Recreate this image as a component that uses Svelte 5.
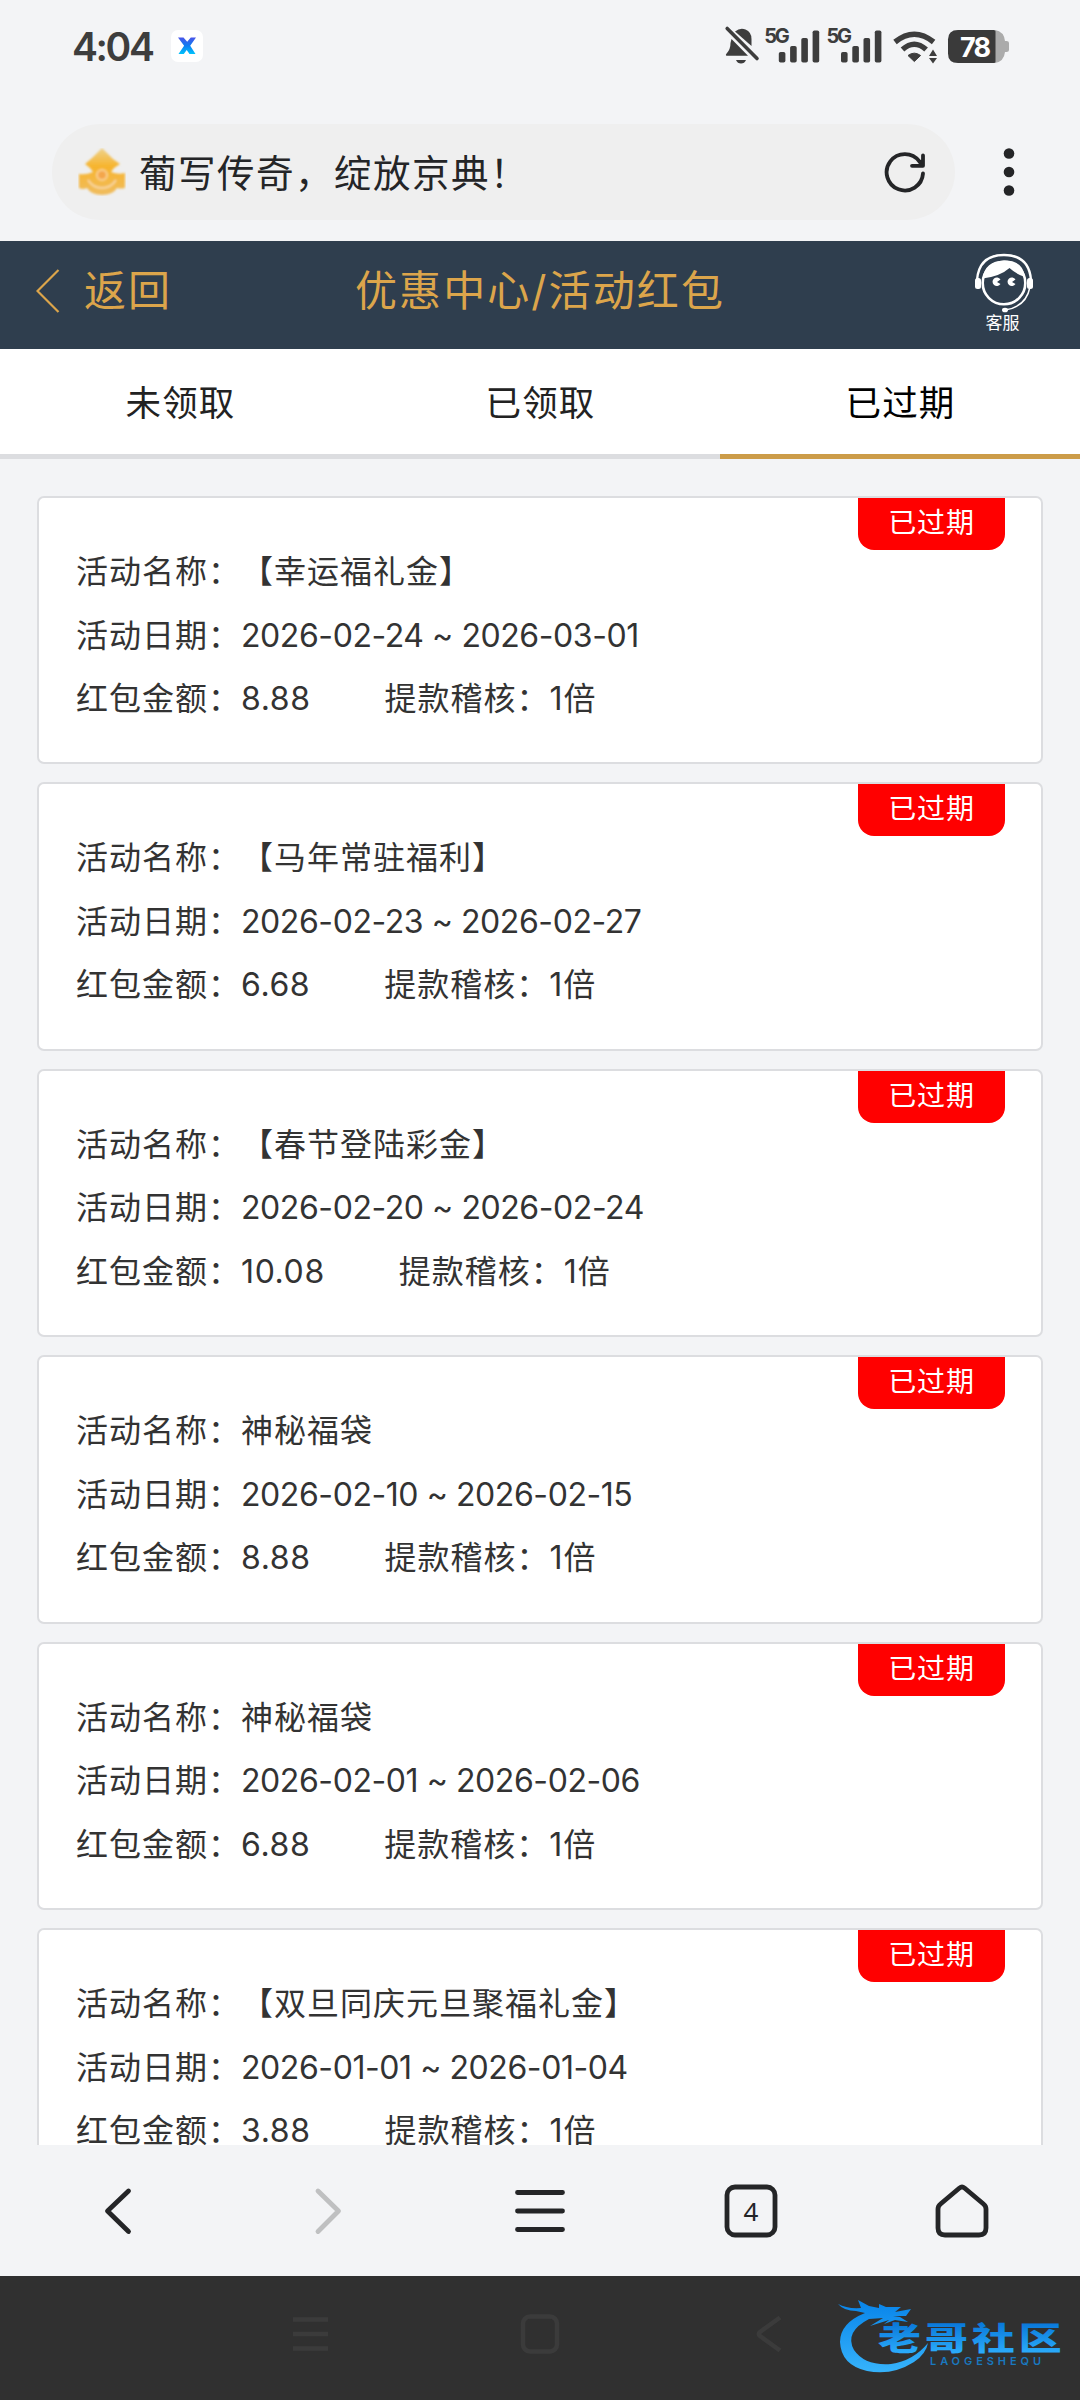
<script lang="ts">
  type Packet = {
    name: string;
    start: string;
    end: string;
    amount: string;
  };

  const tabs = ["未领取", "已领取", "已过期"];
  let active = $state(2);

  const packets: Packet[] = [
    { name: "【幸运福礼金】", start: "2026-02-24", end: "2026-03-01", amount: "8.88" },
    { name: "【马年常驻福利】", start: "2026-02-23", end: "2026-02-27", amount: "6.68" },
    { name: "【春节登陆彩金】", start: "2026-02-20", end: "2026-02-24", amount: "10.08" },
    { name: "神秘福袋", start: "2026-02-10", end: "2026-02-15", amount: "8.88" },
    { name: "神秘福袋", start: "2026-02-01", end: "2026-02-06", amount: "6.88" },
    { name: "【双旦同庆元旦聚福礼金】", start: "2026-01-01", end: "2026-01-04", amount: "3.88" },
  ];

  // left edge and height of each signal bar
  const bars = [[14.5, 10.5], [25.8, 16.5], [37, 24.5], [48.3, 32]];
</script>

<div class="screen">
  <div class="status">
    <span class="clock">4:04</span>
    <svg class="app-badge" viewBox="0 0 32 32" aria-hidden="true">
      <defs>
        <linearGradient id="x-fill" x1="0" y1="0" x2="0" y2="1">
          <stop offset="0" stop-color="#4a54e8" />
          <stop offset=".5" stop-color="#0b7df2" />
          <stop offset="1" stop-color="#00c3fb" />
        </linearGradient>
      </defs>
      <rect width="32" height="32" rx="7" fill="#fff" />
      <path d="M7 7.5h5.5l3.7 4.3 3.6-4.3H25l-5.8 8.2 5.3 8.3h-6l-2.8-3.9-2.9 3.9H7.5l5.6-8.3z" fill="url(#x-fill)" />
    </svg>
    <svg class="status-icons" viewBox="0 0 288 40" aria-hidden="true">
      <g fill="#3d3d3d">
        <path d="M9.5 13 26 29.8H4.5Q3 29 5 27 8.5 23 8.5 17z" />
        <path d="M13 5.5Q18 1.500 23.500 3.500 29.500 6 29.500 13V20z" />
        <path d="M14 34h10q-1.500 3.500-5 3.500t-5-3.500z" />
        <path d="M5.200 2.500 35 32.500" stroke="#3d3d3d" stroke-width="3.600" stroke-linecap="round" />
        {#each [42.3, 104.5] as x}
          <g transform="translate({x} 0)">
            <text x="0" y="16.500" class="net" textLength="25.500">5G</text>
            {#each bars as [left, h]}
              <rect x={left} y={36.5 - h} width="6.600" height={h} rx="1.800" />
            {/each}
          </g>
        {/each}
        <path d="M186 29.500Q192.300 24.800 198.600 29.500L192.300 35.500z" stroke="#3d3d3d" stroke-width="1" stroke-linejoin="round" />
        <path d="M207 30 211 23.500l4 6.500zM207 32h8l-4 5.500z" />
      </g>
      <g fill="none" stroke="#3d3d3d" stroke-width="5.500">
        <path d="M173 16Q192.300.5 211.600 16" />
        <path d="M180.500 23.500Q192.300 13 204.100 23.500" />
      </g>
      <path d="M273 4q9 1.500 10 11h1.500q2.500 0 2.500 2v7q0 2-2.500 2H283q-1 9.500-10 11z" fill="#ababab" />
      <path d="M236 4H272q1.500 0 1.500 1.500v30q0 1.500-1.500 1.500H236q-10 0-10-9.500v-14Q226 4 236 4z" fill="#3a3a3a" />
      <text x="238" y="30.500" class="battery" textLength="31">78</text>
    </svg>
  </div>

  <div class="browser-bar">
    <div class="address">
      <svg class="favicon" viewBox="0 0 48 48" aria-hidden="true">
        <defs>
          <linearGradient id="gold" x1="0" y1="0" x2="0" y2="1">
            <stop offset="0" stop-color="#eed28d" />
            <stop offset=".4" stop-color="#f7b42d" />
            <stop offset="1" stop-color="#f0bd60" />
          </linearGradient>
          <filter id="soft"><feGaussianBlur stdDeviation="1.100" /></filter>
        </defs>
        <g filter="url(#soft)">
          <path d="M24 0 32 8 35 11 42 16 36 20 33 24Q40 27 47 25V40Q42 41 39 40 35 47 24 47T9 40Q5 42 1 40V26Q8 27 15 24L12 20 7 16 14 10z" fill="url(#gold)" />
          <circle cx="24" cy="27" r="5" fill="#f4a64b" stroke="#fbd18f" stroke-width="2" />
          <path d="M10 32q5 8 14 8t14-8" fill="none" stroke="#f8d7a2" stroke-width="2" />
        </g>
      </svg>
      <span class="page-title">葡写传奇，绽放京典！</span>
      <svg class="reload" viewBox="0 0 44 44" aria-hidden="true">
        <path d="M40 23.500A18.200 18.200 0 1 1 36.500 11.500L39.500 15.500M40 5.500V15.800H29" />
      </svg>
    </div>
    <svg class="more" viewBox="0 0 12 50" aria-hidden="true">
      <circle cx="6" cy="6.500" r="5.300" />
      <circle cx="6" cy="25" r="5.300" />
      <circle cx="6" cy="43.500" r="5.300" />
    </svg>
  </div>

  <header class="nav">
    <button class="back" type="button">
      <svg viewBox="0 0 24 44" aria-hidden="true"><path d="M22.500 1 1.500 22l21 21" /></svg>
      <span>返回</span>
    </button>
    <h1>优惠中心/活动红包</h1>
    <button class="service" type="button">
      <svg viewBox="0 0 60 60" aria-hidden="true">
        <path d="M3 27Q5 2 30 2t27 25" fill="none" stroke="#fff" stroke-width="2.400" />
        <path d="M56 34Q52 54 31 57" fill="none" stroke="#fff" stroke-width="1.500" />
        <rect x="1" y="25" width="6" height="11" rx="2.500" />
        <rect x="53" y="25" width="6" height="11" rx="2.500" />
        <circle cx="30" cy="30" r="21.300" fill="none" stroke="#fff" stroke-width="2.600" />
        <path d="M8.500 25.500Q11 8 30 7.500T51 24Q42 21 35.500 15 26 23.500 8.500 25.500z" />
        <path d="M26.500 26.500 23 29l3.500 2a4.300 4.300 0 1 1 0-4.500zM41.500 26.500 38 29l3.500 2a4.300 4.300 0 1 1 0-4.500z" />
        <ellipse cx="31" cy="57" rx="3" ry="2.300" />
      </svg>
      <span>客服</span>
    </button>
  </header>

  <nav class="tabs">
    {#each tabs as tab, i}
      <button type="button" class:active={active === i} onclick={() => (active = i)}>{tab}</button>
    {/each}
  </nav>

  <main class="list">
    {#each packets as packet}
      <article class="card">
        <span class="badge">已过期</span>
        <p>活动名称：{packet.name}</p>
        <p>活动日期：<span class="date">{packet.start} ~ {packet.end}</span></p>
        <p>红包金额：<span class="amount">{packet.amount}</span>提款稽核：1倍</p>
      </article>
    {/each}
  </main>

  <footer class="toolbar">
    <svg viewBox="0 0 60 60" aria-hidden="true"><path d="M40.500 10 19.500 30l21 20.500" /></svg>
    <svg class="disabled" viewBox="0 0 60 60" aria-hidden="true"><path d="M19 10l20.500 20L19 50.500" /></svg>
    <svg viewBox="0 0 60 60" aria-hidden="true"><path d="M7.500 11.500h45M7.500 30h45M7.500 48.500h45" /></svg>
    <svg viewBox="0 0 60 60" aria-hidden="true">
      <rect x="6" y="6" width="48" height="48" rx="8" />
      <text x="30" y="39.500">4</text>
    </svg>
    <svg viewBox="0 0 60 60" aria-hidden="true">
      <path d="M6 28q0-3 2.500-5L27.500 7Q30 5 32.500 7l19 16q2.500 2 2.500 5v19q0 7-7 7H13q-7 0-7-7z" />
    </svg>
  </footer>

  <div class="system">
    <svg viewBox="0 0 40 40" aria-hidden="true"><path d="M2 5.500h35M2 20h35M2 34.500h35" /></svg>
    <svg viewBox="0 0 40 40" aria-hidden="true"><rect x="3" y="2.500" width="34" height="35" rx="7" /></svg>
    <svg viewBox="0 0 40 40" aria-hidden="true"><path d="M31 3.500 11 18q-2.500 2 0 4l20 14.500" /></svg>
    <svg class="watermark" viewBox="0 0 230 84" aria-hidden="true">
      <defs>
        <linearGradient id="blue" gradientUnits="userSpaceOnUse" x1="0" y1="12" x2="0" y2="78">
          <stop offset="0" stop-color="#0a86ea" />
          <stop offset="1" stop-color="#35b2fb" />
        </linearGradient>
        <linearGradient id="blue-text" gradientUnits="userSpaceOnUse" x1="0" y1="-28" x2="0" y2="2">
          <stop offset="0" stop-color="#0876d8" />
          <stop offset="1" stop-color="#2aaafa" />
        </linearGradient>
      </defs>
      <g fill="url(#blue)">
        <path d="M30 21Q5 31 5 50 6 73 32 79 57 84 79 70 91 62 93 51 78 69 56 72 30 74 19 58 9 40 34 27L48 26 35 34 54 28 49 32 60 28 73 30 65 25 58 24 71 24 76 17 60 20 66 15 51 15 44 12 44 16 34 14 23 8 26 16Q12 17 3 12 9 19 21 19z" />
      </g>
      <text class="brand" transform="translate(43 58) scale(1.340 1)" textLength="137">老哥社区</text>
      <text class="latin" x="95" y="72.500" textLength="111">LAOGESHEQU</text>
    </svg>
  </div>
</div>

<style>
  :global(body) {
    margin: 0;
    background: #f3f4f6;
  }

  .screen {
    display: flex;
    flex-direction: column;
    width: 1080px;
    height: 2400px;
    overflow: hidden;
    background: #f3f4f6;
    color: #333;
    font-family: Inter, "Noto Sans CJK SC", sans-serif;
    text-spacing-trim: space-all;
  }

  button {
    border: 0;
    padding: 0;
    background: none;
    font: inherit;
  }

  .status {
    display: flex;
    align-items: center;
    box-sizing: border-box;
    height: 92px;
    padding: 0 70px 0 72px;
  }

  .clock {
    width: 99px;
    color: #3d3d3d;
    font-size: 39px;
    font-weight: 600;
    letter-spacing: -2.400px;
  }

  .app-badge {
    width: 32px;
    height: 32px;
  }

  .status-icons {
    width: 288px;
    height: 40px;
    margin-left: auto;
    overflow: visible;
  }

  .net {
    font-size: 20px;
    font-weight: 700;
  }

  .battery {
    fill: #fff;
    font-size: 27px;
    font-weight: 700;
  }

  .browser-bar {
    display: flex;
    align-items: center;
    height: 96px;
    margin-bottom: 21px;
    padding: 32px 0 0 52px;
  }

  .address {
    display: flex;
    align-items: center;
    box-sizing: border-box;
    width: 903px;
    height: 96px;
    padding: 0 28px 0 26px;
    border-radius: 48px;
    background: #efefef;
  }

  .favicon {
    width: 48px;
    height: 48px;
  }

  .page-title {
    margin-left: 13px;
    padding-bottom: 3px;
    color: #242527;
    font-size: 37.500px;
    letter-spacing: 1.500px;
  }

  .reload {
    width: 44px;
    height: 44px;
    margin-left: auto;
    fill: none;
    stroke: #242527;
    stroke-width: 3.800;
    stroke-linecap: round;
    stroke-linejoin: round;
  }

  .more {
    width: 12px;
    height: 50px;
    margin-left: 47.500px;
    fill: #242527;
  }

  .nav {
    display: grid;
    grid-template-columns: 1fr auto 1fr;
    align-items: center;
    flex: none;
    height: 108px;
    background: #2f3e4e;
    color: #dca54b;
    font-size: 42px;
    letter-spacing: 2.100px;
  }

  .back {
    display: flex;
    align-items: center;
    gap: 24px;
    height: 96px;
    padding: 0 0 9px 36px;
    color: inherit;
    letter-spacing: inherit;
  }

  .back span {
    padding-bottom: 6px;
  }

  .back svg {
    width: 24px;
    height: 44px;
    fill: none;
    stroke: #dca54b;
    stroke-width: 2.200;
  }

  h1 {
    margin: 0;
    padding-bottom: 16px;
    font-size: 42px;
    font-weight: 400;
  }

  .service {
    display: flex;
    flex-direction: column;
    align-items: center;
    justify-self: end;
    margin: 0 46px 5px 0;
    color: #fff;
    font-size: 17px;
    line-height: 20px;
    letter-spacing: 0;
  }

  .service svg {
    width: 60px;
    height: 60px;
    fill: #fff;
  }

  .service span {
    margin-right: 3px;
  }

  .tabs {
    display: grid;
    grid-template-columns: repeat(3, 1fr);
    flex: none;
    height: 110px;
    background: #fff;
  }

  .tabs button {
    padding: 0 0 2px 1px;
    border-bottom: 5px solid #dcdde0;
    color: #222;
    font-size: 35.500px;
    letter-spacing: 1.200px;
  }

  .tabs .active {
    border-bottom-color: #cc9c49;
    color: #000;
  }

  .list {
    display: flex;
    flex: none;
    flex-direction: column;
    gap: 18px;
    box-sizing: border-box;
    height: 1686px;
    padding: 37px 37px 0;
    overflow: hidden;
  }

  .card {
    position: relative;
    flex: none;
    box-sizing: border-box;
    height: 268.450px;
    padding: 42px 37px 0;
    border: 2px solid #dcdde0;
    border-radius: 7px;
    background: #fff;
  }

  .card p {
    margin: 0;
    font-size: 32px;
    line-height: 63.500px;
    letter-spacing: 1px;
    white-space: nowrap;
  }

  .date {
    letter-spacing: -.430px;
  }

  .amount {
    margin-right: 74px;
    letter-spacing: .600px;
  }

  .badge {
    position: absolute;
    top: 0;
    right: 36px;
    width: 147px;
    height: 52px;
    border-radius: 0 0 16px 16px;
    background: #f00;
    color: #fff;
    font-size: 28px;
    line-height: 50px;
    letter-spacing: .8px;
    text-align: center;
  }

  .toolbar {
    display: grid;
    grid-template-columns: repeat(5, 211px);
    place-content: center;
    justify-items: center;
    flex: none;
    height: 131px;
  }

  .toolbar svg {
    width: 60px;
    height: 60px;
    fill: none;
    stroke: #242527;
    stroke-width: 4.800;
    stroke-linecap: round;
    stroke-linejoin: round;
  }

  .toolbar .disabled {
    stroke: #bfc0c1;
  }

  .toolbar text {
    fill: #242527;
    stroke: none;
    font-family: "Noto Sans", sans-serif;
    font-size: 26px;
    text-anchor: middle;
  }

  .system {
    position: relative;
    display: flex;
    align-items: center;
    justify-content: center;
    gap: 189px;
    flex: none;
    height: 124px;
    background: #303030;
  }

  .system svg {
    width: 40px;
    height: 40px;
    margin-top: -8px;
    fill: none;
    stroke: #3b3b3b;
    stroke-width: 4.500;
  }

  .system .watermark {
    position: absolute;
    top: 16px;
    right: 15px;
    width: 230px;
    height: 84px;
    margin: 0;
    stroke: none;
  }

  .system .brand {
    fill: url(#blue-text);
    font-family: "Noto Sans CJK SC", sans-serif;
    font-size: 32px;
    font-weight: 900;
  }

  .latin {
    fill: #1a78bf;
    font-size: 11px;
    font-weight: 600;
  }
</style>
